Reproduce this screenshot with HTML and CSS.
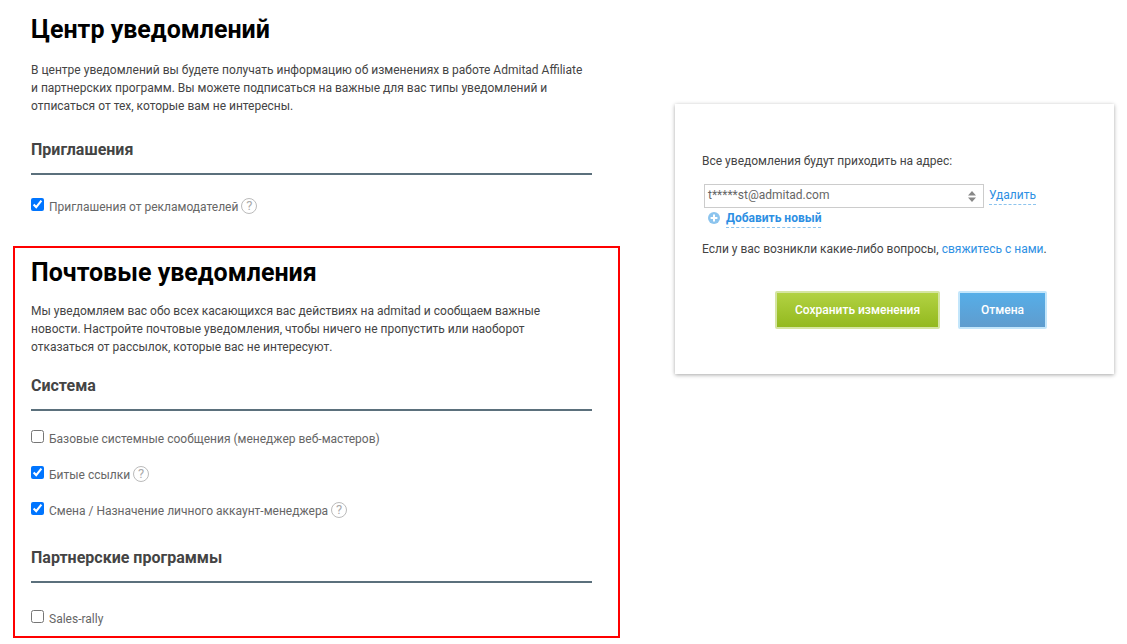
FILE: index.html
```html
<!DOCTYPE html>
<html lang="ru">
<head>
<meta charset="utf-8">
<title>Центр уведомлений</title>
<link rel="stylesheet" href="styles.css">
</head>
<body>
<main class="page">
  <div class="left">
    <section class="intro">
      <h1>Центр уведомлений</h1>
      <p class="lead">В центре уведомлений вы будете получать информацию об изменениях в работе Admitad Affiliate и партнерских программ. Вы можете подписаться на важные для вас типы уведомлений и отписаться от тех, которые вам не интересны.</p>
      <h2>Приглашения</h2>
      <label class="opt"><input type="checkbox" checked><span>Приглашения от рекламодателей</span><i class="q">?</i></label>
    </section>
    <section class="mail">
      <h1>Почтовые уведомления</h1>
      <p class="lead">Мы уведомляем вас обо всех касающихся вас действиях на admitad и сообщаем важные новости. Настройте почтовые уведомления, чтобы ничего не пропустить или наоборот отказаться от рассылок, которые вас не интересуют.</p>
      <h2>Система</h2>
      <label class="opt"><input type="checkbox"><span>Базовые системные сообщения (менеджер веб-мастеров)</span></label>
      <label class="opt"><input type="checkbox" checked><span>Битые ссылки</span><i class="q">?</i></label>
      <label class="opt"><input type="checkbox" checked><span>Смена / Назначение личного аккаунт-менеджера</span><i class="q">?</i></label>
      <h2 class="h-second">Партнерские программы</h2>
      <label class="opt"><input type="checkbox"><span>Sales-rally</span></label>
    </section>
  </div>
  <aside class="card">
    <p class="addr-label">Все уведомления будут приходить на адрес:</p>
    <div class="addr-row">
      <div class="select">
        <span class="select-value">t*****st@admitad.com</span>
        <svg class="arrows" width="8" height="11" viewBox="0 0 8 11"><path d="M4 0 8 4.5H0zM4 11 0 6.5h8z" fill="#888"/></svg>
      </div>
      <a class="link dashed">Удалить</a>
    </div>
    <div class="add-row">
      <svg class="plus" width="12" height="12" viewBox="0 0 12 12"><circle cx="6" cy="6" r="6" fill="#8cc4ee"/><path d="M6 2.6v6.8M2.6 6h6.8" stroke="#fff" stroke-width="2"/></svg>
      <a class="link dashed strong">Добавить новый</a>
    </div>
    <p class="help">Если у вас возникли какие-либо вопросы, <a class="link">свяжитесь с нами</a>.</p>
    <div class="actions">
      <button class="btn save" type="button">Сохранить изменения</button>
      <button class="btn cancel" type="button">Отмена</button>
    </div>
  </aside>
</main>
</body>
</html>
```
FILE: styles.css
```css
html, body { margin: 0; padding: 0; height: 644px; overflow: hidden; background: #fff; }
body { font-family: Roboto, "Liberation Sans", sans-serif; font-size: 12px; color: #444; }
.page { display: flex; align-items: flex-start; }
.left { width: 607px; margin-left: 13px; flex: none; }
.intro { padding: 15px 28px 0 18px; height: 246px; box-sizing: border-box; }
.mail { border: 2px solid #f00; padding: 10px 26px 0 16px; height: 392px; box-sizing: border-box; overflow: hidden; }
h1 { margin: 0; font-size: 25px; line-height: 30px; font-weight: 700; color: #000; }
.lead { margin: 16px 0 0; max-width: 555px; line-height: 18px; color: #444; }
h2 { margin: 25px 0 0; padding-bottom: 13px; border-bottom: 2px solid #5b707c; font-size: 16px; line-height: 20px; font-weight: 700; color: #444; }
.opt { display: flex; align-items: center; height: 18px; margin-top: 18px; color: #666; }
h2 + .opt { margin-top: 21px; }
.opt input { width: 13px; height: 13px; margin: 0 5px 2px 0; flex: none; }
.opt span { margin-top: 3px; }
.q { display: inline-flex; align-items: center; justify-content: center; width: 14px; height: 14px; margin: 1px 0 0 3px; border: 1px solid #bbb; border-radius: 50%; font-style: normal; font-size: 13px; color: #aaa; }
.mail .lead { margin-top: 14px; }
.mail h2 { margin-top: 20px; }
.mail h2 + .opt { margin-top: 17px; }
.mail .h-second { margin-top: 30px; }
.mail .h-second + .opt { margin-top: 25px; }
.card { width: 439px; height: 270px; margin: 104px 0 0 55px; flex: none; box-sizing: border-box; padding: 48px 28px 0 27px; background: #fff; box-shadow: 0 1px 4px rgba(0,0,0,.35); }
.addr-label { margin: 0; line-height: 18px; color: #444; }
.addr-row { display: flex; align-items: center; margin: 14px 0 0 2px; }
.select { display: flex; align-items: center; justify-content: space-between; width: 280px; height: 24px; box-sizing: border-box; padding: 0 7px 0 3px; border: 1px solid #ccc; color: #666; font-size: 12px; }
.select-value { margin-bottom: 2px; }
.link { color: #2d8fe3; }
.dashed { border-bottom: 1px dashed #8cc4ee; padding-bottom: 2px; }
.addr-row .link { margin: 1px 0 0 5px; font-size: 12px; }
.add-row { display: flex; align-items: center; margin: 1px 0 0 6px; height: 18px; }
.plus { margin-right: 6px; }
.strong { font-weight: 700; margin-top: 3px; }
.help { margin: 13px 0 0; line-height: 18px; color: #444; }
.actions { display: flex; margin: 33px 0 0 73px; gap: 18px; }
.btn { height: 38px; box-sizing: border-box; padding: 0; border-radius: 2px; font: 500 12px Roboto, "Liberation Sans", sans-serif; color: #fff; }
.save { width: 165px; border: 2px solid #d5e5a2; background: linear-gradient(#b2d243, #93b91e); }
.cancel { width: 89px; border: 2px solid #c3e6fb; background: linear-gradient(#56aee8, #5f9cce); }
```
